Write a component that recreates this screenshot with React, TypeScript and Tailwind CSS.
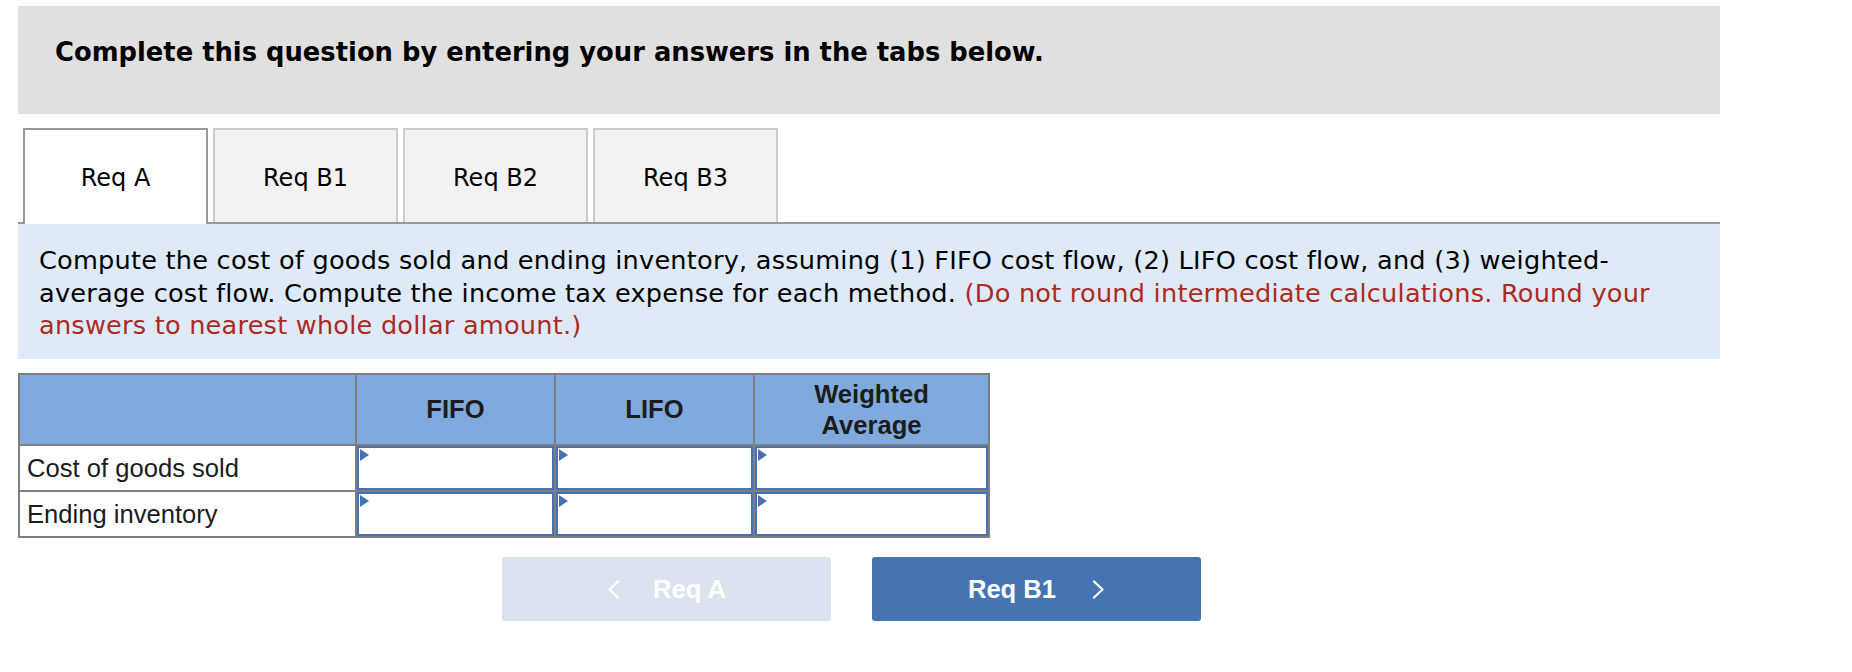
const verdana = "font-['DejaVu_Sans',Verdana,sans-serif]";
const arial = "font-['Liberation_Sans',Arial,sans-serif]";

const tabs = ['Req A', 'Req B1', 'Req B2', 'Req B3'];

function Chevron({ dir }: { dir: 'left' | 'right' }) {
  return (
    <svg width="13" height="19" viewBox="0 0 13 19" fill="none">
      <polyline
        points={dir === 'left' ? '11,1.5 2.5,9.5 11,17.5' : '2,1.5 10.5,9.5 2,17.5'}
        stroke="white"
        strokeWidth="2.2"
        strokeLinecap="round"
        strokeLinejoin="round"
      />
    </svg>
  );
}

function AnswerCell() {
  return (
    <div className="relative bg-white">
      <input
        type="text"
        className="block h-full w-full border-2 border-[#4472b4] bg-white px-2 text-[22px] outline-none"
      />
      <svg className="absolute left-[3px] top-[3px]" width="9" height="12" viewBox="0 0 9 12">
        <polygon points="0,0 9,6 0,12" fill="#4472b4" />
      </svg>
    </div>
  );
}

export default function App() {
  return (
    <div className="min-h-[672px] bg-white pt-[6px]">
      <div className="ml-[18px] w-[1702px]">
        <div className="h-[108px] bg-[#e0e0e0] pl-[37px] pt-[30px]">
          <h2 className={`${verdana} text-[25.8px] font-bold leading-[32px] text-black`}>
            Complete this question by entering your answers in the tabs below.
          </h2>
        </div>

        <div className="mt-[14px] flex gap-[5px] border-b-2 border-[#999] pl-[5px]">
          {tabs.map((tab, i) =>
            i === 0 ? (
              <div
                key={tab}
                className={`${verdana} -mb-[2px] flex h-[96px] w-[185px] items-center justify-center border-2 border-b-0 border-[#999] bg-white pt-[1px] text-[24px] text-black`}
              >
                {tab}
              </div>
            ) : (
              <div
                key={tab}
                className={`${verdana} flex h-[94px] w-[185px] items-center justify-center border-2 border-b-0 border-[#ccc] bg-[#f2f2f2] pt-[3px] text-[24px] text-black`}
              >
                {tab}
              </div>
            ),
          )}
        </div>

        <div className="h-[135px] bg-[#deeaf7] pl-[21px] pr-[18px] pt-[20px]">
          <p className={`${verdana} text-[25.6px] leading-[32.5px] tracking-[0.22px] text-black`}>
            Compute the cost of goods sold and ending inventory, assuming (1) FIFO cost flow, (2)
            LIFO cost flow, and (3) weighted-average cost flow. Compute the income tax expense for
            each method.{' '}
            <span className="text-[#ac2a24]">
              (Do not round intermediate calculations. Round your answers to nearest whole dollar
              amount.)
            </span>
          </p>
        </div>

        <div
          className={`${arial} mt-[14px] grid w-[972px] grid-cols-[335px_197px_197px_233px] grid-rows-[69px_44px_44px] gap-[2px] border-2 border-[#7f7f7f] bg-[#7f7f7f] text-[25.6px]`}
        >
          <div className="bg-[#80aadd]" />
          <div className="flex items-center justify-center bg-[#80aadd] font-bold text-[#1c1c1c]">
            FIFO
          </div>
          <div className="flex items-center justify-center bg-[#80aadd] font-bold text-[#1c1c1c]">
            LIFO
          </div>
          <div className="flex items-center justify-center bg-[#80aadd] text-center font-bold leading-[31px] text-[#1c1c1c]">
            Weighted
            <br />
            Average
          </div>

          <div className="flex items-center bg-white pl-[7px] text-[#1c1c1c]">Cost of goods sold</div>
          <AnswerCell />
          <AnswerCell />
          <AnswerCell />

          <div className="flex items-center bg-white pl-[7px] text-[#1c1c1c]">Ending inventory</div>
          <AnswerCell />
          <AnswerCell />
          <AnswerCell />
        </div>

        <div className={`${arial} ml-[484px] mt-[19px] flex gap-[41px]`}>
          <button className="flex h-[64px] w-[329px] items-center justify-center gap-[33px] rounded-[3px] bg-[#dae3ef] text-[25.6px] font-bold text-white">
            <Chevron dir="left" />
            <span>Req A</span>
          </button>
          <button className="flex h-[64px] w-[329px] items-center justify-center gap-[36px] rounded-[3px] bg-[#4674b3] text-[25.6px] font-bold text-white">
            <span>Req B1</span>
            <Chevron dir="right" />
          </button>
        </div>
      </div>
    </div>
  );
}
